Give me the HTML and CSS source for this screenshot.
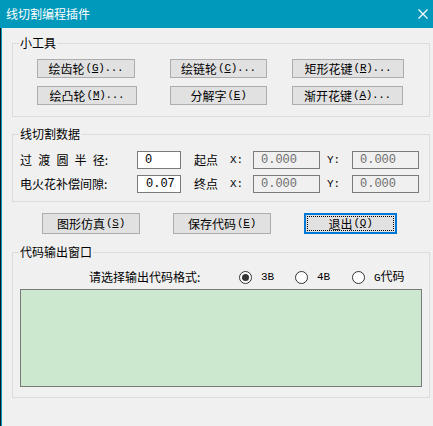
FILE: index.html
```html
<!DOCTYPE html>
<html lang="zh-CN">
<head>
<meta charset="utf-8">
<title>线切割编程插件</title>
<link rel="stylesheet" href="styles.css">
</head>
<body>
<div class="win">
  <div class="titlebar">
    <span class="title">线切割编程插件</span>
    <svg class="close" width="10" height="10" viewBox="0 0 10 10"><path d="M0.5 0.5L9.5 9.5M9.5 0.5L0.5 9.5" stroke="#fff" stroke-width="1.2" fill="none"/></svg>
  </div>
  <div class="content">
    <div class="group g-tools">
      <span class="legend">小工具</span>
      <div class="tools">
        <button class="btn w98">绘齿轮<span class="m">(<u>G</u>)...</span></button>
        <button class="btn w97">绘链轮<span class="m">(<u>C</u>)...</span></button>
        <button class="btn w112">矩形花键<span class="m">(<u>R</u>)...</span></button>
        <button class="btn w100">绘凸轮<span class="m">(<u>M</u>)...</span></button>
        <button class="btn w97">分解字<span class="m">(<u>E</u>)</span></button>
        <button class="btn w111">渐开花键<span class="m">(<u>A</u>)...</span></button>
      </div>
    </div>

    <div class="group g-data">
      <span class="legend">线切割数据</span>
      <div class="data">
        <span class="lbl spaced">过 渡 圆 半 径:</span>
        <span class="field">0</span>
        <span class="pt">起点</span>
        <span class="axis m">X:</span>
        <span class="field off">0.000</span>
        <span class="axis ax-y m">Y:</span>
        <span class="field off">0.000</span>

        <span class="lbl">电火花补偿间隙:</span>
        <span class="field f2">0.07</span>
        <span class="pt">终点</span>
        <span class="axis m">X:</span>
        <span class="field off">0.000</span>
        <span class="axis ax-y m">Y:</span>
        <span class="field off">0.000</span>
      </div>
    </div>

    <div class="actions">
      <button class="btn tall w98">图形仿真<span class="m">(<u>S</u>)</span></button>
      <button class="btn tall w98">保存代码<span class="m">(<u>E</u>)</span></button>
      <button class="btn tall w93 default">退出<span class="m">(<u>Q</u>)</span></button>
    </div>

    <div class="group g-out">
      <span class="legend">代码输出窗口</span>
      <div class="fmt">
        <span class="fmt-lbl">请选择输出代码格式:</span>
        <label class="opt"><span class="radio checked"></span><span class="m">3B</span></label>
        <label class="opt"><span class="radio"></span><span class="m">4B</span></label>
        <label class="opt"><span class="radio"></span><span><span class="m">G</span>代码</span></label>
      </div>
      <div class="output"></div>
    </div>
  </div>
</div>
</body>
</html>
```

FILE: styles.css
```css
* { box-sizing: border-box; }
html, body {
  margin: 0;
  padding: 0;
  background: #f0f0f0;
}
body {
  width: 433px;
  height: 426px;
  overflow: hidden;
  font-family: "Noto Sans CJK SC", "Noto Sans", sans-serif;
  font-size: 12px;
  color: #000;
}
.m {
  font-family: "Liberation Mono", "DejaVu Sans Mono", monospace;
  font-size: 11px;
}
u { text-underline-offset: 1px; }

.win {
  width: 433px;
  height: 426px;
  display: flex;
  flex-direction: column;
}
.titlebar {
  height: 28px;
  background: #0099bc;
  display: flex;
  align-items: center;
  padding-left: 6px;
  flex: none;
}
.title {
  color: #fff;
  font-size: 12px;
  line-height: 14px;
}
.close {
  margin-left: auto;
  margin-right: 5px;
}

.content {
  flex: 1;
  border-left: 1px solid #0d1a22;
  box-shadow: inset 1px 0 0 #0099bc;
  padding-left: 11px;
}

.group {
  position: relative;
  width: 418px;
  border: 1px solid #dcdcdc;
}
.legend {
  position: absolute;
  top: -8px;
  left: 6px;
  padding: 0 1px;
  background: #f0f0f0;
  line-height: 14px;
  font-size: 12px;
}

/* tools */
.g-tools {
  margin-top: 15px;
  padding: 15px 0 11px 24px;
}
.tools {
  display: grid;
  grid-template-columns: 133px 122px auto;
  row-gap: 8px;
}
.btn {
  height: 19px;
  margin: 0;
  padding: 0;
  background: #e1e1e1;
  border: 1px solid #adadad;
  border-radius: 0;
  font-family: "Noto Sans CJK SC", sans-serif;
  font-size: 12px;
  line-height: 15px;
  color: #000;
  display: flex;
  align-items: center;
  justify-content: center;
  white-space: nowrap;
}
.btn .m { margin-left: 1px; letter-spacing: -0.3px; }
.btn.tall { height: 21px; }
.w93 { width: 93px; }
.w97 { width: 97px; }
.w98 { width: 98px; }
.w100 { width: 100px; }
.w111 { width: 111px; }
.w112 { width: 112px; }
.btn.default {
  border: 1px solid #0078d7;
  box-shadow: inset 0 0 0 1px #0078d7;
  outline: 1px dotted #000;
  outline-offset: -4px;
}

/* data */
.g-data {
  margin-top: 17px;
  padding: 16px 0 8px 7px;
}
.data {
  display: grid;
  grid-template-columns: 117px 44px 49px 23px 67px 32px 67px;
  grid-auto-rows: 18px;
  row-gap: 6px;
  align-items: center;
}
.lbl { line-height: 16px; }
.spaced { word-spacing: 3.5px; }
.pt {
  padding-left: 13px;
  line-height: 16px;
}
.axis { line-height: 16px; font-size: 11px; }
.ax-y { padding-left: 7px; }
.field {
  height: 18px;
  border: 1px solid #7a7a7a;
  background: #fff;
  padding-left: 7px;
  font-family: "Liberation Mono", "DejaVu Sans Mono", monospace;
  font-size: 12px;
  line-height: 16px;
  color: #000;
}
.field.f2 { padding-left: 8px; }
.field.off {
  background: #f0f0f0;
  color: #6d6d6d;
}

/* actions */
.actions {
  display: flex;
  gap: 33px;
  margin-top: 11px;
  padding-left: 30px;
}

/* output */
.g-out {
  margin-top: 18px;
  padding: 15px 0 10px 7px;
}
.fmt {
  display: grid;
  grid-template-columns: 69px 150px 56px 57px auto;
  height: 16px;
  align-items: center;
}
.fmt-lbl { grid-column: 2; line-height: 16px; }
.opt {
  display: flex;
  align-items: center;
  gap: 9px;
  line-height: 16px;
}
.radio {
  width: 13px;
  height: 13px;
  border: 1px solid #333;
  border-radius: 50%;
  background: #fff;
  display: flex;
  align-items: center;
  justify-content: center;
  flex: none;
}
.radio.checked::after {
  content: "";
  width: 7px;
  height: 7px;
  border-radius: 50%;
  background: #333;
}
.output {
  margin-top: 5px;
  width: 402px;
  height: 98px;
  background: #cce8cf;
  border: 1px solid #7a7a7a;
}
```
